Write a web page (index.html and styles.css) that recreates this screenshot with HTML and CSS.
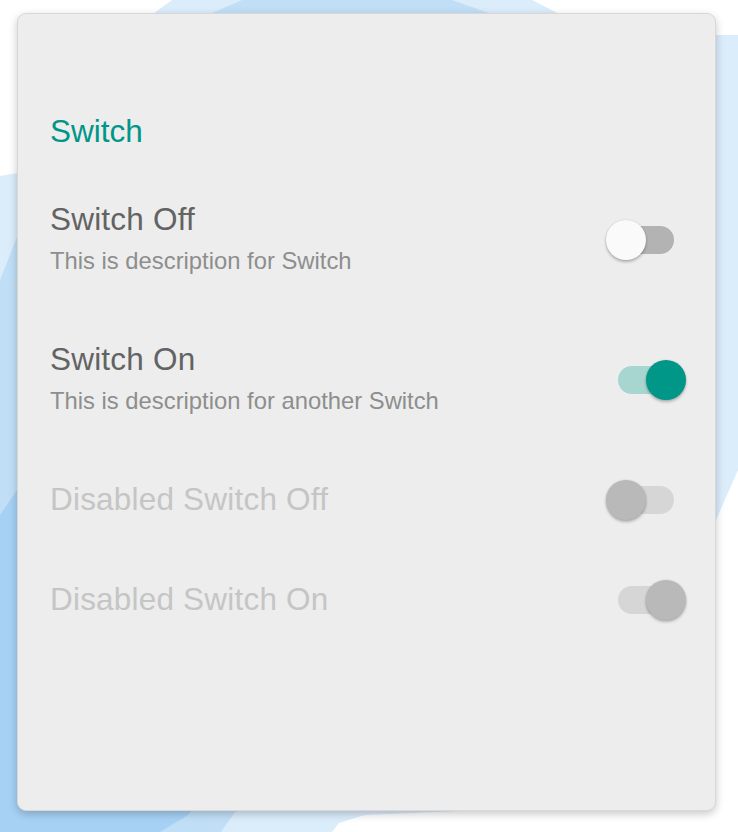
FILE: index.html
```html
<!DOCTYPE html>
<html>
<head>
<meta charset="utf-8">
<link rel="stylesheet" href="styles.css">
</head>
<body>
<svg class="backdrop" width="738" height="832" viewBox="0 0 738 832" aria-hidden="true">
  <polygon class="bg-light" points="172,0 532,0 600,35 738,35 738,470 716,520 716,800 365,815 339,823 332,832 0,832 0,176 17,173 90,60"/>
  <polygon class="bg-mid" points="242,0 452,0 500,17 500,700 235,812 221,832 160,832 0,832 0,280 17,237 150,40"/>
  <polygon class="bg-dark" points="0,515 17,490 120,520 200,800 188,815 160,832 0,832"/>
</svg>
<main class="page">
  <section class="card">
    <h2 class="card-title">Switch</h2>
    <div class="rows">
      <div class="row">
        <div class="text">
          <div class="label">Switch Off</div>
          <div class="desc">This is description for Switch</div>
        </div>
        <span class="switch off"><span class="track"></span><span class="thumb"></span></span>
      </div>
      <div class="row">
        <div class="text">
          <div class="label">Switch On</div>
          <div class="desc">This is description for another Switch</div>
        </div>
        <span class="switch on"><span class="track"></span><span class="thumb"></span></span>
      </div>
      <div class="row disabled">
        <div class="text">
          <div class="label">Disabled Switch Off</div>
        </div>
        <span class="switch off"><span class="track"></span><span class="thumb"></span></span>
      </div>
      <div class="row disabled">
        <div class="text">
          <div class="label">Disabled Switch On</div>
        </div>
        <span class="switch on"><span class="track"></span><span class="thumb"></span></span>
      </div>
    </div>
  </section>
</main>
</body>
</html>
```
FILE: styles.css
```css
html, body {
  margin: 0;
  padding: 0;
  background: #ffffff;
  width: 738px;
  height: 832px;
  overflow: hidden;
  font-family: "Liberation Sans", Arial, sans-serif;
}

.backdrop {
  position: absolute;
  left: 0;
  top: 0;
  z-index: 0;
}
.bg-light { fill: #dbecfb; }
.bg-mid { fill: #c0dff7; }
.bg-dark { fill: #a6d1f5; }

.page {
  position: relative;
  z-index: 1;
  padding: 13px 0 0 17px;
}

.card {
  box-sizing: border-box;
  width: 699px;
  height: 798px;
  background: #ededed;
  border: 1px solid #d8d8d8;
  border-radius: 9px;
  box-shadow: 0 3px 8px rgba(0, 0, 0, 0.22);
  padding: 99px 29px 0 32px;
}

.card-title {
  margin: 0 0 20px;
  font-weight: normal;
  font-size: 31.5px;
  line-height: 36px;
  color: #009688;
}

.rows {
  display: flex;
  flex-direction: column;
}

.row {
  display: flex;
  align-items: center;
  justify-content: space-between;
  padding: 33px 0;
}

.label {
  font-size: 31.5px;
  line-height: 34px;
  letter-spacing: 0.2px;
  color: #636363;
}
.desc {
  margin-top: 10px;
  font-size: 23.8px;
  line-height: 30px;
  color: #8e8e8e;
}
.row.disabled .label { color: #c5c5c5; }

.switch {
  position: relative;
  display: block;
  width: 80px;
  height: 40px;
  flex: none;
  margin: -2px 0 -4px;
}
.track {
  position: absolute;
  left: 12px;
  top: 6px;
  width: 56px;
  height: 28px;
  border-radius: 14px;
  background: #b3b3b3;
}
.thumb {
  position: absolute;
  top: 0;
  left: 0;
  width: 40px;
  height: 40px;
  border-radius: 50%;
  background: #fafafa;
  box-shadow: 0 2px 3px rgba(0, 0, 0, 0.25), 0 0 2px rgba(0, 0, 0, 0.12);
}
.switch.on .thumb {
  left: 40px;
  background: #009688;
}
.switch.on .track { background: #a7d5d0; }

.row.disabled .track { background: #d6d6d6; }
.row.disabled .thumb { background: #b9b9b9; }
```
